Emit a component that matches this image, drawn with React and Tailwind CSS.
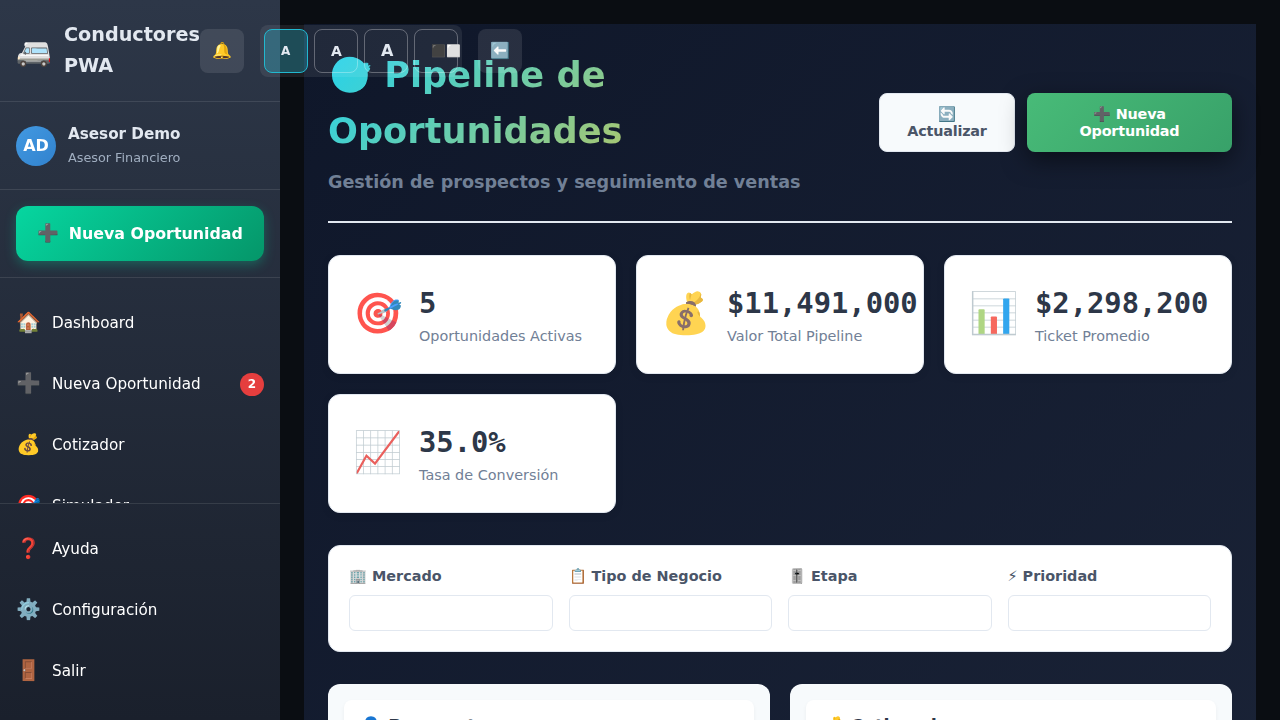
const navItems = [
  { icon: "🏠", label: "Dashboard" },
  { icon: "➕", label: "Nueva Oportunidad", badge: "2" },
  { icon: "💰", label: "Cotizador" },
  { icon: "🎯", label: "Simulador" },
];

const footerItems = [
  { icon: "❓", label: "Ayuda" },
  { icon: "⚙️", label: "Configuración" },
  { icon: "🚪", label: "Salir" },
];

const stats = [
  { icon: "🎯", value: "5", label: "Oportunidades Activas" },
  { icon: "💰", value: "$11,491,000", label: "Valor Total Pipeline" },
  { icon: "📊", value: "$2,298,200", label: "Ticket Promedio" },
  { icon: "📈", value: "35.0%", label: "Tasa de Conversión" },
];

const filters = ["🏢 Mercado", "📋 Tipo de Negocio", "🎚️ Etapa", "⚡ Prioridad"];

const stages = ["👤 Prospectos", "💰 Cotizando"];

function NavItem({ icon, label, badge }) {
  return (
    <a className="flex h-[61px] shrink-0 items-center gap-3 px-4 text-[15.2px] text-white">
      <span className="flex w-6 shrink-0 pb-px text-[20px]">{icon}</span>
      <span className="flex-1 pt-0.5">{label}</span>
      {badge && (
        <span className="mt-px flex h-[23px] w-6 items-center justify-center rounded-full bg-[#e53e3e] pt-0.5 text-[12px] font-bold">
          {badge}
        </span>
      )}
    </a>
  );
}

function SizeButton({ className, children }) {
  return (
    <button
      className={`flex h-11 w-11 shrink-0 items-center rounded-lg border px-4 font-bold whitespace-nowrap text-[#e2e8f0] ${className}`}
    >
      {children}
    </button>
  );
}

function Sidebar() {
  return (
    <aside className="relative z-10 flex h-[720px] w-[280px] shrink-0 flex-col bg-linear-to-b/srgb from-[#2d3748] to-[#1a202c] will-change-transform">
      <div className="flex h-[102px] shrink-0 items-center border-b border-white/10 pl-4">
        <div className="flex w-[184px] shrink-0 items-center gap-3">
          <span className="w-9 shrink-0 pt-0.5 text-[28.8px]">🚐</span>
          <span className="text-[19.2px] leading-[30.7px] font-bold text-[#e2e8f0]">Conductores PWA</span>
        </div>
        <div className="flex shrink-0 items-center gap-4">
          <button className="flex h-11 w-11 items-center justify-center rounded-lg bg-white/10 text-[16px]">🔔</button>
          <div className="flex h-[52px] w-[202px] items-center gap-1.5 rounded-lg bg-white/8 p-1">
            <SizeButton className="border-[#22b8cf] bg-[#22d3ee]/25 pt-0.5 text-[12px]">A</SizeButton>
            <SizeButton className="border-white/30 pt-0.5 text-[14px]">A</SizeButton>
            <SizeButton className="border-white/30 text-[16px]">A</SizeButton>
            <SizeButton className="border-white/30 pt-0.5 text-[12px]">⬛⬜</SizeButton>
          </div>
          <button className="flex h-11 w-11 items-center justify-center rounded-lg bg-white/10 text-[16px]">⬅️</button>
        </div>
      </div>
      <div className="flex h-[88px] shrink-0 items-center gap-3 border-b border-white/10 px-4">
        <div className="flex h-10 w-10 items-center justify-center rounded-full bg-linear-135/srgb from-[#4299e1] to-[#3182ce] text-[16px] font-bold text-white">
          AD
        </div>
        <div>
          <div className="text-[15.2px] leading-6 font-bold text-[#e2e8f0]">Asesor Demo</div>
          <div className="text-[12.8px] leading-6 text-[#a0aec0]">Asesor Financiero</div>
        </div>
      </div>
      <div className="h-[88px] shrink-0 border-b border-white/10 p-4">
        <button className="flex h-[55px] w-full items-center justify-center gap-[9.5px] rounded-xl bg-linear-135/srgb from-[#06d6a0] to-[#059669] text-[15.84px] font-bold text-white shadow-[0_4px_12px_rgba(6,214,160,0.3)]">
          <span className="text-[17.6px]">➕</span>
          Nueva Oportunidad
        </button>
      </div>
      <nav className="flex h-[225px] shrink-0 flex-col overflow-hidden pt-3.5">
        {navItems.map((item) => (
          <NavItem key={item.label} {...item} />
        ))}
      </nav>
      <div className="flex-1 border-t border-white/10 pt-3.5">
        {footerItems.map((item) => (
          <NavItem key={item.label} {...item} />
        ))}
      </div>
    </aside>
  );
}

function StatCard({ icon, value, label }) {
  return (
    <div className="flex h-[119px] min-w-0 items-center gap-4 rounded-xl border border-[#e2e8f0] bg-white px-6 shadow-[0_2px_8px_rgba(0,0,0,0.08)]">
      <span className="w-[50px] shrink-0 pb-1 text-[40px] leading-[64px] opacity-80">{icon}</span>
      <div className="pt-[5px] whitespace-nowrap">
        <div className="mb-[5px] font-['DejaVu_Sans_Mono',monospace] text-[28.8px] leading-[34px] font-bold text-[#2d3748]">
          {value}
        </div>
        <div className="text-[14.4px] leading-[23px] text-[#718096]">{label}</div>
      </div>
    </div>
  );
}

export default function App() {
  return (
    <div className="flex h-[720px] w-[1280px] overflow-hidden bg-[#0a0d12] font-['DejaVu_Sans',sans-serif] leading-[1.6]">
      <Sidebar />
      <main className="h-[720px] flex-1 overflow-hidden p-6 pb-0">
        <div className="h-[1500px] bg-linear-135/srgb from-[#0f172a] to-[#1e273b] px-6 pt-[23px]">
          <header className="flex h-[176px] items-start justify-between border-b-2 border-[#e2e8f0]">
            <div className="w-[535px]">
              <h1 className="bg-linear-135/srgb from-[#22d3ee] to-[#fbbf24] bg-clip-text text-[35.2px] leading-[56.3px] font-bold text-transparent">
                🎯 Pipeline de
                <br />
                Oportunidades
              </h1>
              <p className="mt-2 text-[17.6px] leading-7 font-bold text-[#718096]">
                Gestión de prospectos y seguimiento de ventas
              </p>
            </div>
            <div className="mt-[46px] flex gap-3 text-[14.4px] leading-[17px] font-bold tracking-[-0.2px]">
              <button className="h-[59px] w-[136px] rounded-lg border border-[#e2e8f0] bg-[#f7fafc] text-[#4a5568]">
                🔄
                <br />
                Actualizar
              </button>
              <button className="h-[59px] w-[205px] rounded-lg bg-linear-135/srgb from-[#48bb78] to-[#38a169] text-white shadow-[0_8px_25px_rgba(0,0,0,0.5)]">
                ➕ Nueva
                <br />
                Oportunidad
              </button>
            </div>
          </header>
          <section className="mt-8 grid grid-cols-3 gap-5">
            {stats.map((stat) => (
              <StatCard key={stat.label} {...stat} />
            ))}
          </section>
          <section className="mt-8 grid h-[107px] grid-cols-4 gap-4 rounded-xl border border-[#e2e8f0] bg-white p-5">
            {filters.map((label) => (
              <div key={label} className="flex flex-col gap-1.5">
                <label className="h-[23px] text-[14.4px] leading-[21px] font-bold whitespace-nowrap text-[#4a5568]">
                  {label}
                </label>
                <div className="h-9 rounded-md border border-[#e2e8f0] bg-white" />
              </div>
            ))}
          </section>
          <section className="mt-8 grid grid-cols-2 gap-5">
            {stages.map((stage) => (
              <div key={stage} className="h-[500px] rounded-xl bg-[#f7fafc] p-4">
                <div className="h-[60px] rounded-lg bg-white px-4 pt-3 text-[17.6px] leading-7 font-bold text-[#2d3748] shadow-[0_2px_4px_rgba(0,0,0,0.05)]">
                  {stage}
                </div>
              </div>
            ))}
          </section>
        </div>
      </main>
    </div>
  );
}
